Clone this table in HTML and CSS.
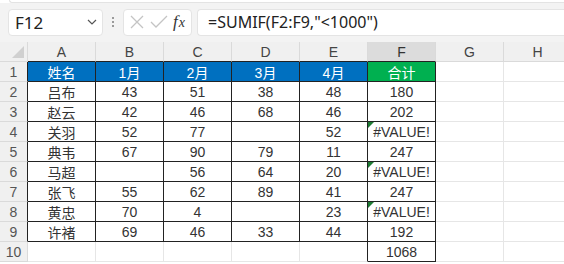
FILE: index.html
```html
<!DOCTYPE html>
<html lang="zh">
<head>
<meta charset="utf-8">
<link rel="stylesheet" href="styles.css">
</head>
<body>
<div class="app">
  <div class="ribbon-edge"></div>
  <div class="formula-row">
    <div class="name-box">
      <span>F12</span>
      <svg class="chev" width="10" height="6" viewBox="0 0 10 6"><path d="M1 1 L5 5 L9 1" fill="none" stroke="#555" stroke-width="1.2"/></svg>
    </div>
    <div class="grip"><i></i><i></i><i></i></div>
    <div class="fx-box">
      <svg width="16" height="16" viewBox="0 0 16 16"><path d="M2 2 L14 14 M14 2 L2 14" stroke="#c4c4c4" stroke-width="1.3" fill="none"/></svg>
      <svg width="18" height="16" viewBox="0 0 18 16"><path d="M1 8 L6 13 L17 2" stroke="#c4c4c4" stroke-width="1.3" fill="none"/></svg>
      <span class="fx"><i>f</i><i>x</i></span>
    </div>
    <div class="formula">=SUMIF(F2:F9,"&lt;1000")</div>
  </div>

  <div class="sheet">
    <div class="corner"><svg width="12" height="12" viewBox="0 0 12 12"><path d="M12 0 L12 12 L0 12 Z" fill="#d0d0d0"/></svg></div>
    <div class="ch">A</div><div class="ch">B</div><div class="ch">C</div><div class="ch">D</div><div class="ch">E</div><div class="ch sel">F</div><div class="ch plain">G</div><div class="ch plain">H</div>

    <div class="rh b">1</div>
    <div class="c t blue">姓名</div><div class="c t blue">1月</div><div class="c t blue">2月</div><div class="c t blue">3月</div><div class="c t blue">4月</div><div class="c t green">合计</div><div class="c"></div><div class="c"></div>

    <div class="rh b">2</div>
    <div class="c t">吕布</div><div class="c t">43</div><div class="c t">51</div><div class="c t">38</div><div class="c t">48</div><div class="c t">180</div><div class="c"></div><div class="c"></div>

    <div class="rh b">3</div>
    <div class="c t">赵云</div><div class="c t">42</div><div class="c t">46</div><div class="c t">68</div><div class="c t">46</div><div class="c t">202</div><div class="c"></div><div class="c"></div>

    <div class="rh b">4</div>
    <div class="c t">关羽</div><div class="c t">52</div><div class="c t">77</div><div class="c t"></div><div class="c t">52</div><div class="c t err">#VALUE!</div><div class="c"></div><div class="c"></div>

    <div class="rh b">5</div>
    <div class="c t">典韦</div><div class="c t">67</div><div class="c t">90</div><div class="c t">79</div><div class="c t">11</div><div class="c t">247</div><div class="c"></div><div class="c"></div>

    <div class="rh b">6</div>
    <div class="c t">马超</div><div class="c t"></div><div class="c t">56</div><div class="c t">64</div><div class="c t">20</div><div class="c t err">#VALUE!</div><div class="c"></div><div class="c"></div>

    <div class="rh b">7</div>
    <div class="c t">张飞</div><div class="c t">55</div><div class="c t">62</div><div class="c t">89</div><div class="c t">41</div><div class="c t">247</div><div class="c"></div><div class="c"></div>

    <div class="rh b">8</div>
    <div class="c t">黄忠</div><div class="c t">70</div><div class="c t">4</div><div class="c t"></div><div class="c t">23</div><div class="c t err">#VALUE!</div><div class="c"></div><div class="c"></div>

    <div class="rh b">9</div>
    <div class="c t">许褚</div><div class="c t">69</div><div class="c t">46</div><div class="c t">33</div><div class="c t">44</div><div class="c t">192</div><div class="c"></div><div class="c"></div>

    <div class="rh">10</div>
    <div class="c"></div><div class="c"></div><div class="c"></div><div class="c"></div><div class="c edge"></div><div class="c t">1068</div><div class="c"></div><div class="c"></div>
  </div>
</div>
</body>
</html>
```

FILE: styles.css
```css
html, body {
  margin: 0;
  padding: 0;
  background: #ffffff;
}

.app {
  width: 564px;
  height: 264px;
  overflow: hidden;
  font-family: "Liberation Sans", "Noto Sans CJK SC", sans-serif;
}

/* strip of the ribbon panel above the formula row */
.ribbon-edge {
  height: 2px;
  margin-left: 9px;
  background: #ffffff;
  border-bottom: 1px solid #e3e3e3;
  border-left: 1px solid #e3e3e3;
  border-bottom-left-radius: 4px;
}

.formula-row {
  display: flex;
  align-items: center;
  height: 39px;
  padding-left: 8px;
  padding-bottom: 1px;
  background: #f3f3f3;
  box-sizing: border-box;
}

.name-box {
  display: flex;
  align-items: center;
  justify-content: space-between;
  box-sizing: border-box;
  width: 95px;
  height: 27px;
  padding: 0 5px 0 6px;
  background: #ffffff;
  border: 1px solid #e4e4e4;
  border-radius: 4px;
  font-family: "Noto Sans", "Liberation Sans", sans-serif;
  font-size: 17px;
  color: #222;
}

.grip {
  display: flex;
  flex-direction: column;
  gap: 2px;
  margin: 0 9px;
}

.grip i {
  display: block;
  width: 2px;
  height: 2px;
  background: #9a9a9a;
}

.fx-box {
  display: flex;
  align-items: center;
  box-sizing: border-box;
  width: 69px;
  height: 27px;
  padding-left: 5px;
  gap: 5px;
  background: #ffffff;
  border: 1px solid #e4e4e4;
  border-radius: 4px;
}

.fx {
  font-family: "Liberation Serif", serif;
  font-style: italic;
  font-size: 17px;
  color: #333;
}

.fx i:last-child {
  font-size: 14px;
  margin-left: 1px;
}

.formula {
  flex: 1;
  box-sizing: border-box;
  height: 27px;
  margin-left: 5px;
  padding-left: 10px;
  line-height: 25px;
  background: #ffffff;
  border: 1px solid #e4e4e4;
  border-right: none;
  border-radius: 4px 0 0 4px;
  font-family: "Noto Sans", "Liberation Sans", sans-serif;
  font-size: 16px;
  color: #222;
}

/* worksheet grid */
.sheet {
  display: grid;
  grid-template-columns: 28px repeat(8, 68px);
  grid-auto-rows: 20px;
  font-size: 14px;
  color: #333;
}

.sheet > div {
  box-sizing: border-box;
  display: flex;
  align-items: center;
  justify-content: center;
  position: relative;
}

.corner {
  background: #f0f0f0;
  border-right: 1px solid #dadada;
  border-bottom: 1px solid #dadada;
  justify-content: flex-end !important;
  align-items: flex-end !important;
  padding: 0 3px 3px 0;
}

.ch {
  background: #f0f0f0;
  border-right: 1px solid #dadada;
  border-bottom: 1px solid #222;
  color: #444;
}

.ch.plain {
  border-bottom-color: #dadada;
}

.ch.sel {
  background: #dcdcdc;
  color: #333;
}

.rh {
  background: #f0f0f0;
  border-right: 1px solid #dadada;
  border-bottom: 1px solid #dadada;
  color: #555;
}

.rh.b {
  border-right-color: #222;
}

.c {
  border-right: 1px solid #e6e6e6;
  border-bottom: 1px solid #e6e6e6;
}

.c.t {
  border-right-color: #222;
  border-bottom-color: #222;
}

.c.edge {
  border-right-color: #222;
}

.blue {
  background: #0070c0;
  color: #ffffff;
}

.green {
  background: #00b050;
  color: #ffffff;
}

/* error indicator in the cell's top-left corner */
.err::before {
  content: "";
  position: absolute;
  left: 0;
  top: 0;
  border-top: 6px solid #1e7b34;
  border-right: 6px solid transparent;
}
```
